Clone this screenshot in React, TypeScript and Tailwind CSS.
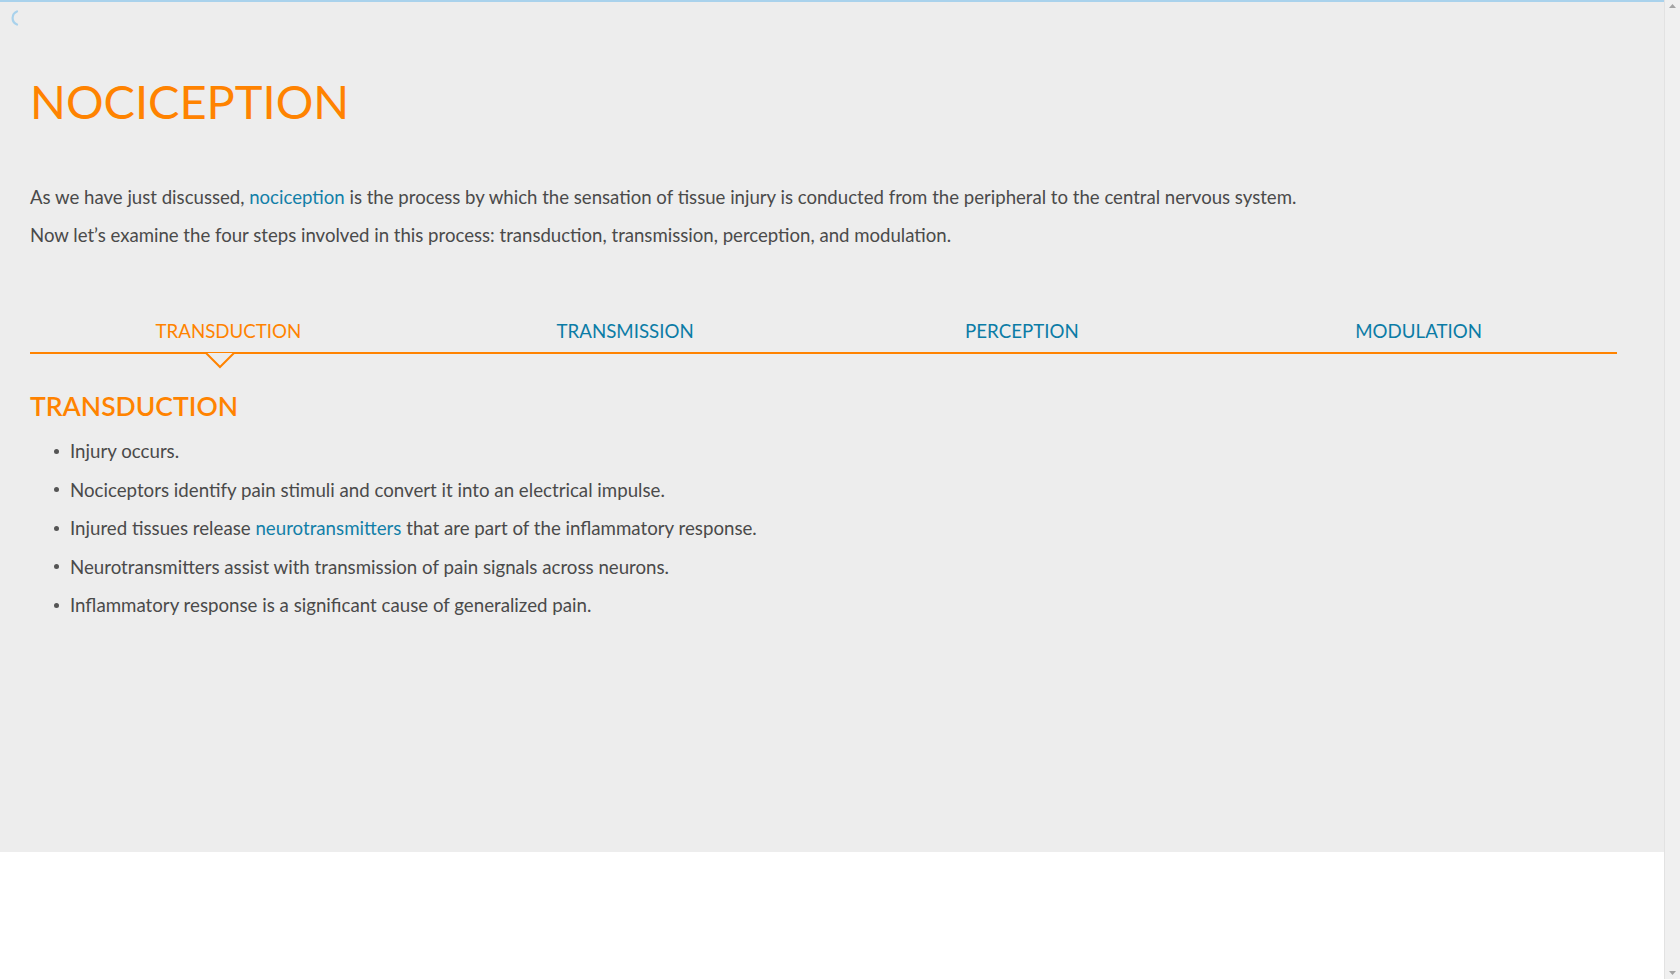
import React, { useState } from 'react'

const tabs = ['TRANSDUCTION', 'TRANSMISSION', 'PERCEPTION', 'MODULATION']

const font = { fontFamily: 'Lato, "Open Sans", sans-serif' }

function Spinner() {
  return (
    <svg width="10" height="16" viewBox="0 0 10 16" className="block">
      <path d="M8 1.5 A7 7 0 0 0 8 14.5" fill="none" stroke="#a9d2ec" strokeWidth="2.2" strokeLinecap="round" />
    </svg>
  )
}

function Scrollbar() {
  return (
    <div className="flex h-full w-[16px] shrink-0 flex-col items-center justify-between border-l border-[#e2e2e2] bg-[#f0f0f0] py-[3px]">
      <svg width="9" height="6" viewBox="0 0 9 6">
        <path d="M4.5 1 L8 5 L1 5 Z" fill="#a3a3a3" />
      </svg>
      <svg width="9" height="6" viewBox="0 0 9 6">
        <path d="M1 1 L8 1 L4.5 5 Z" fill="#a3a3a3" />
      </svg>
    </div>
  )
}

export default function App() {
  const [active, setActive] = useState(0)

  return (
    <div className="flex h-[979px] w-full overflow-hidden bg-white" style={font}>
      <div className="flex-1">
        <div className="h-[852px] border-t-2 border-[#a9d2ec] bg-[#ededed]">
          <div className="pl-[9px] pt-[8px]">
            <Spinner />
          </div>

          <div className="pl-[30px] pr-[47px]">
            <h1 className="mt-[52px] text-[47px] font-normal leading-none text-[#ff8300]">NOCICEPTION</h1>

            <div className="mt-[58px] text-[18.6px] leading-[28px] text-[#4a4a4a]">
              <p>
                As we have just discussed, <a className="text-[#127fa8]">nociception</a> is the process by which the
                sensation of tissue injury is conducted from the peripheral to the central nervous system.
              </p>
              <p className="mt-[9.6px]">
                Now let&rsquo;s examine the four steps involved in this process: transduction, transmission,
                perception, and modulation.
              </p>
            </div>

            <div className="relative mt-[70px] flex border-b-2 border-[#ff8300]">
              {tabs.map((t, i) => (
                <button
                  key={t}
                  onClick={() => setActive(i)}
                  className={
                    'relative flex-1 pb-[9.5px] text-center text-[18.7px] leading-[24px] ' +
                    (i === active ? 'text-[#ff8300]' : 'text-[#0b7ca6]')
                  }
                >
                  {t}
                  {i === active && (
                    <svg
                      width="30"
                      height="17"
                      viewBox="0 0 30 17"
                      className="absolute left-[175px] top-[33.5px]"
                    >
                      <path d="M1 1 L15 15 L29 1" fill="#ededed" stroke="#ff8300" strokeWidth="2" />
                    </svg>
                  )}
                </button>
              ))}
            </div>

            <h2 className="mt-[36px] text-[26.5px] font-semibold leading-[32px] text-[#ff8300]">{tabs[active]}</h2>

            <ul className="mt-[15px] pl-[24px] text-[18.7px] leading-[28px] text-[#4a4a4a]">
              {[
                <>Injury occurs.</>,
                <>Nociceptors identify pain stimuli and convert it into an electrical impulse.</>,
                <>
                  Injured tissues release <a className="text-[#127fa8]">neurotransmitters</a> that are part of the
                  inflammatory response.
                </>,
                <>Neurotransmitters assist with transmission of pain signals across neurons.</>,
                <>Inflammatory response is a significant cause of generalized pain.</>,
              ].map((c, i) => (
                <li key={i} className="mb-[10.6px] flex items-center gap-[11px]">
                  <span className="h-[5px] w-[5px] shrink-0 rounded-full bg-[#555]" />
                  <span>{c}</span>
                </li>
              ))}
            </ul>
          </div>
        </div>
      </div>
      <Scrollbar />
    </div>
  )
}
